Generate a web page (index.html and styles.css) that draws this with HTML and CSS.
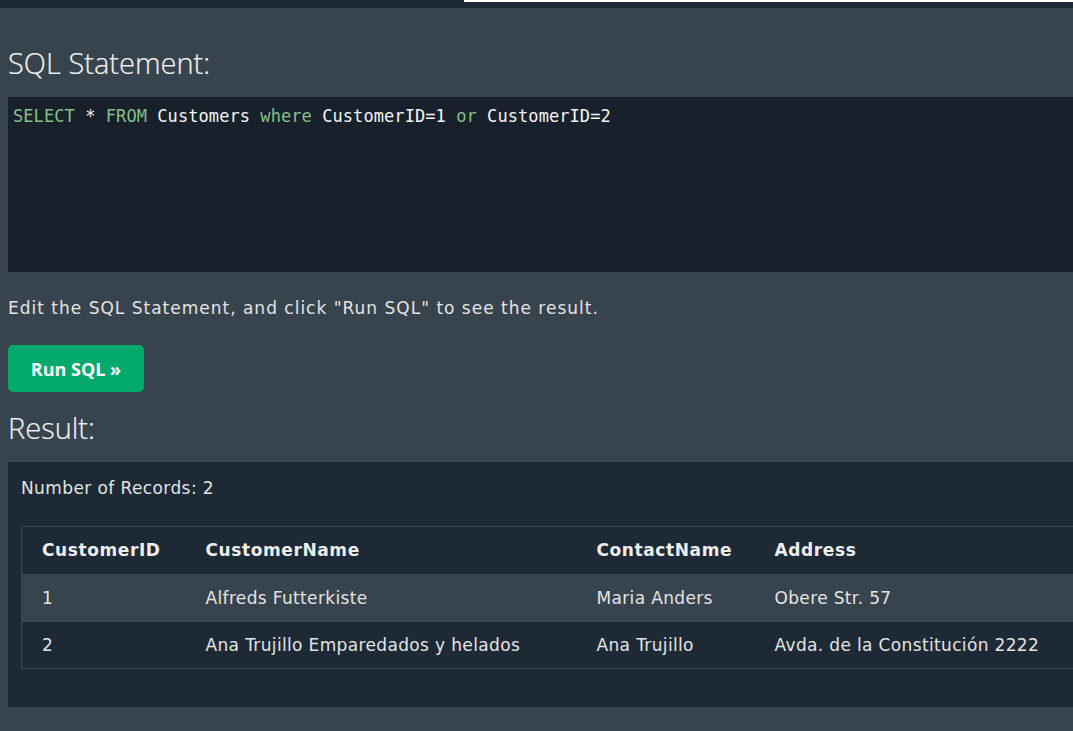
FILE: index.html
```html
<!DOCTYPE html>
<html>
<head>
<meta charset="utf-8">
<link rel="stylesheet" href="styles.css">
</head>
<body>
<div class="topbar"><div class="topbar-left"></div><div class="topbar-right"></div></div>
<main class="page">
  <h2 class="heading heading-sql">SQL Statement:</h2>
  <div class="code"><span class="kw">SELECT</span> * <span class="kw">FROM</span> Customers <span class="kw">where</span> CustomerID=1 <span class="kw">or</span> CustomerID=2</div>
  <p class="hint">Edit the SQL Statement, and click "Run SQL" to see the result.</p>
  <button class="run">Run SQL »</button>
  <h2 class="heading heading-result">Result:</h2>
  <section class="result">
    <div class="count">Number of Records: 2</div>
    <table class="grid">
      <colgroup>
        <col class="c1"><col class="c2"><col class="c3"><col class="c4">
      </colgroup>
      <thead>
        <tr><th>CustomerID</th><th>CustomerName</th><th>ContactName</th><th>Address</th></tr>
      </thead>
      <tbody>
        <tr class="odd"><td>1</td><td>Alfreds Futterkiste</td><td>Maria Anders</td><td>Obere Str. 57</td></tr>
        <tr><td>2</td><td>Ana Trujillo Emparedados y helados</td><td>Ana Trujillo</td><td>Avda. de la Constitución 2222</td></tr>
      </tbody>
    </table>
  </section>
</main>
</body>
</html>
```
FILE: styles.css
```css
html, body {
  margin: 0;
  padding: 0;
  background: #38444d;
  overflow: hidden;
  width: 1073px;
  height: 731px;
}
body {
  font-family: "DejaVu Sans", Verdana, sans-serif;
  color: #f1f1f1;
}
.topbar {
  display: flex;
  height: 8px;
  background: #1d2a35;
}
.topbar-left {
  width: 464px;
}
.topbar-right {
  flex: 1;
  height: 2px;
  background: #ffffff;
}
.page {
  padding-left: 8px;
  width: 1065px;
}
.heading {
  font-family: "Open Sans", "Noto Sans", sans-serif;
  font-weight: 300;
  font-size: 29px;
  color: #f1f1f1;
  margin: 0;
  line-height: 40px;
  -webkit-text-stroke: 0.2px #f1f1f1;
}
.heading-sql {
  margin-top: 35px;
  margin-bottom: 14px;
}
.code {
  background: #18212b;
  height: 175px;
  box-sizing: border-box;
  padding: 6px 5px;
  font-family: "DejaVu Sans Mono", "Liberation Mono", monospace;
  font-size: 17px;
  letter-spacing: 0.07px;
  line-height: 26px;
  color: #f4f4f4;
  white-space: pre;
}
.kw {
  color: #86bf8a;
}
.hint {
  margin: 22px 0 0;
  font-size: 17px;
  letter-spacing: 1px;
  line-height: 28px;
  color: #e3e3e3;
}
.run {
  display: block;
  margin-top: 23px;
  height: 47px;
  width: 136px;
  border: 0;
  border-radius: 5px;
  background: #04aa6d;
  color: #ffffff;
  font-family: "Open Sans", "Noto Sans", sans-serif;
  font-weight: 700;
  font-size: 18px;
  padding: 0;
}
.heading-result {
  margin-top: 16px;
  margin-bottom: 14px;
}
.result {
  background: #1d2a35;
  height: 245px;
  box-sizing: border-box;
  padding: 13px 0 0 13px;
}
.count {
  font-size: 17px;
  letter-spacing: 0.4px;
  line-height: 26px;
  color: #e3e3e3;
}
.grid {
  margin-top: 25px;
  width: 1052px;
  table-layout: fixed;
  border-collapse: collapse;
  border: 1px solid #3d4a55;
  border-right: 0;
  font-size: 17px;
  letter-spacing: 0.35px;
  color: #e3e3e3;
}
.c1 { width: 164px; }
.c2 { width: 391px; }
.c3 { width: 178px; }
.c4 { width: auto; }
.grid th, .grid td {
  text-align: left;
  padding: 0 0 0 20px;
  height: 47px;
  box-sizing: border-box;
  white-space: nowrap;
}
.grid th {
  font-weight: 700;
  letter-spacing: 0.6px;
  color: #eeeeee;
}
.grid tr.odd td {
  background: #38444d;
  height: 48px;
}
```
